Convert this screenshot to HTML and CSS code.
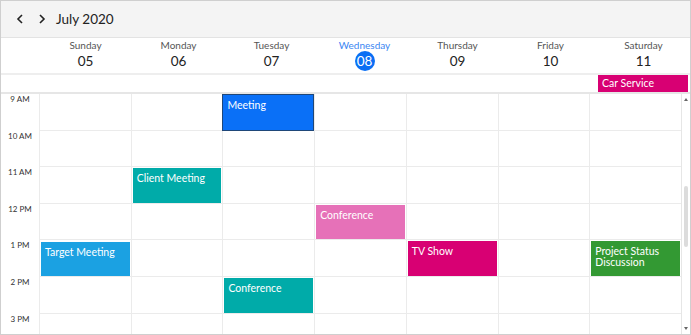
FILE: index.html
```html
<!DOCTYPE html>
<html lang="en">

<head>
    <meta charset="UTF-8">
    <meta name="viewport" content="width=device-width, initial-scale=1.0">
    <title>Scheduler - Week View</title>
    <link rel="stylesheet" href="styles.css">
</head>

<body>

    <div class="scheduler">

        <div class="toolbar">
            <button class="nav" aria-label="Previous week">
                <svg width="8" height="10" viewBox="0 0 8 10"><polyline points="6,1 2,5 6,9" /></svg>
            </button>
            <button class="nav" aria-label="Next week">
                <svg width="8" height="10" viewBox="0 0 8 10"><polyline points="2,1 6,5 2,9" /></svg>
            </button>
            <span class="month">July 2020</span>
        </div>

        <div class="day-header">
            <div class="spacer"></div>
            <div class="day"><span class="day-name">Sunday</span><span class="day-num">05</span></div>
            <div class="day"><span class="day-name">Monday</span><span class="day-num">06</span></div>
            <div class="day"><span class="day-name">Tuesday</span><span class="day-num">07</span></div>
            <div class="day today"><span class="day-name">Wednesday</span><span class="day-num">08</span></div>
            <div class="day"><span class="day-name">Thursday</span><span class="day-num">09</span></div>
            <div class="day"><span class="day-name">Friday</span><span class="day-num">10</span></div>
            <div class="day"><span class="day-name">Saturday</span><span class="day-num">11</span></div>
        </div>

        <div class="all-day">
            <div class="spacer"></div>
            <div class="all-day-cell"></div>
            <div class="all-day-cell"></div>
            <div class="all-day-cell"></div>
            <div class="all-day-cell"></div>
            <div class="all-day-cell"></div>
            <div class="all-day-cell"></div>
            <div class="all-day-cell"><div class="all-day-event magenta">Car Service</div></div>
        </div>

        <div class="body">
            <div class="grid">
                <!-- 9 AM -->
                <div class="row">
                    <div class="time">9 AM</div>
                    <div class="cell"></div>
                    <div class="cell"></div>
                    <div class="cell"><div class="event blue selected">Meeting</div></div>
                    <div class="cell"></div>
                    <div class="cell"></div>
                    <div class="cell"></div>
                    <div class="cell"></div>
                </div>
                <!-- 10 AM -->
                <div class="row">
                    <div class="time">10 AM</div>
                    <div class="cell"></div>
                    <div class="cell"></div>
                    <div class="cell"></div>
                    <div class="cell"></div>
                    <div class="cell"></div>
                    <div class="cell"></div>
                    <div class="cell"></div>
                </div>
                <!-- 11 AM -->
                <div class="row">
                    <div class="time">11 AM</div>
                    <div class="cell"></div>
                    <div class="cell"><div class="event teal">Client Meeting</div></div>
                    <div class="cell"></div>
                    <div class="cell"></div>
                    <div class="cell"></div>
                    <div class="cell"></div>
                    <div class="cell"></div>
                </div>
                <!-- 12 PM -->
                <div class="row">
                    <div class="time">12 PM</div>
                    <div class="cell"></div>
                    <div class="cell"></div>
                    <div class="cell"></div>
                    <div class="cell"><div class="event pink">Conference</div></div>
                    <div class="cell"></div>
                    <div class="cell"></div>
                    <div class="cell"></div>
                </div>
                <!-- 1 PM -->
                <div class="row">
                    <div class="time">1 PM</div>
                    <div class="cell"><div class="event sky">Target Meeting</div></div>
                    <div class="cell"></div>
                    <div class="cell"></div>
                    <div class="cell"></div>
                    <div class="cell"><div class="event magenta">TV Show</div></div>
                    <div class="cell"></div>
                    <div class="cell"><div class="event green">Project Status Discussion</div></div>
                </div>
                <!-- 2 PM -->
                <div class="row">
                    <div class="time">2 PM</div>
                    <div class="cell"></div>
                    <div class="cell"></div>
                    <div class="cell"><div class="event teal">Conference</div></div>
                    <div class="cell"></div>
                    <div class="cell"></div>
                    <div class="cell"></div>
                    <div class="cell"></div>
                </div>
                <!-- 3 PM -->
                <div class="row">
                    <div class="time">3 PM</div>
                    <div class="cell"></div>
                    <div class="cell"></div>
                    <div class="cell"></div>
                    <div class="cell"></div>
                    <div class="cell"></div>
                    <div class="cell"></div>
                    <div class="cell"></div>
                </div>
            </div>

            <div class="scrollbar">
                <span class="arrow up"></span>
                <span class="thumb"></span>
                <span class="arrow down"></span>
            </div>
        </div>

    </div>

</body>

</html>
```

FILE: styles.css
```css
body {
    margin: 0;
    font-family: 'Lato', 'Noto Sans', sans-serif;
    color: #333;
    background-color: #fff;
}

.scheduler {
    width: 691px;
    height: 335px;
    box-sizing: border-box;
    border: 1px solid #cfcfcf;
    display: flex;
    flex-direction: column;
    overflow: hidden;
}

/* toolbar */

.toolbar {
    height: 36px;
    flex: none;
    display: flex;
    align-items: center;
    padding-left: 8px;
    background-color: #f4f4f4;
    border-bottom: 1px solid #e3e3e3;
}

.nav {
    width: 22px;
    height: 22px;
    padding: 0;
    border: none;
    background: none;
    display: flex;
    align-items: center;
    justify-content: center;
    cursor: pointer;
}

.nav svg polyline {
    fill: none;
    stroke: #222;
    stroke-width: 1.6;
}

.month {
    margin-left: 3px;
    font-size: 13.5px;
    color: #222;
}

/* day header */

.day-header,
.all-day {
    display: grid;
    grid-template-columns: 38px repeat(7, 1fr);
    flex: none;
}

.day-header {
    height: 35px;
    border-bottom: 2px solid #eeeeee;
}

.day {
    display: flex;
    flex-direction: column;
    align-items: center;
    padding-top: 1px;
}

.day-name {
    font-size: 10px;
    line-height: 12px;
    color: #555;
}

.day-num {
    height: 20px;
    line-height: 20px;
    font-size: 13.5px;
    color: #222;
}

.today .day-name {
    color: #3a86f2;
}

.today .day-num {
    width: 20px;
    text-align: center;
    border-radius: 50%;
    background-color: #0a6ff4;
    color: #fff;
}

/* all day row */

.all-day {
    height: 17px;
    border-bottom: 2px solid #e6e6e6;
}

.all-day-cell {
    display: flex;
}

.all-day-event {
    flex: 1;
    margin: 0 2px 0 1px;
    padding-left: 4px;
    font-size: 10.5px;
    line-height: 16px;
    color: #fff;
}

/* time grid */

.body {
    flex: 1;
    display: flex;
    overflow: hidden;
}

.grid {
    flex: 1;
}

.row {
    display: grid;
    grid-template-columns: 38px repeat(7, 1fr);
    height: 36.6px;
}

.time {
    font-size: 8px;
    line-height: 10px;
    text-align: center;
    color: #333;
}

.cell {
    display: flex;
    border-left: 1px solid #ebebeb;
    border-bottom: 1px solid #ebebeb;
}

.event {
    flex: 1;
    margin: 1px 1px 0 1px;
    padding: 5px 4px 3px;
    font-size: 10.5px;
    line-height: 11px;
    color: #fff;
}

.event.selected {
    margin: 0 0 -1px -1px;
    border: 1px solid #1f4779;
}

.blue {
    background-color: #0a70f7;
}

.teal {
    background-color: #00aba9;
}

.pink {
    background-color: #e671b8;
}

.sky {
    margin-top: 2px;
    background-color: #1ba1e2;
}

.magenta {
    background-color: #d80073;
}

.green {
    background-color: #339933;
}

/* scrollbar */

.scrollbar {
    width: 8px;
    flex: none;
    border-left: 1px solid #e6e6e6;
    position: relative;
}

.arrow {
    position: absolute;
    left: 2px;
    width: 0;
    height: 0;
    border-left: 2px solid transparent;
    border-right: 2px solid transparent;
}

.arrow.up {
    top: 4px;
    border-bottom: 3px solid #666;
}

.arrow.down {
    bottom: 4px;
    border-top: 3px solid #666;
}

.thumb {
    position: absolute;
    top: 92px;
    left: 2px;
    width: 4px;
    height: 61px;
    border-radius: 2px;
    background-color: #dcdcdc;
}
```
